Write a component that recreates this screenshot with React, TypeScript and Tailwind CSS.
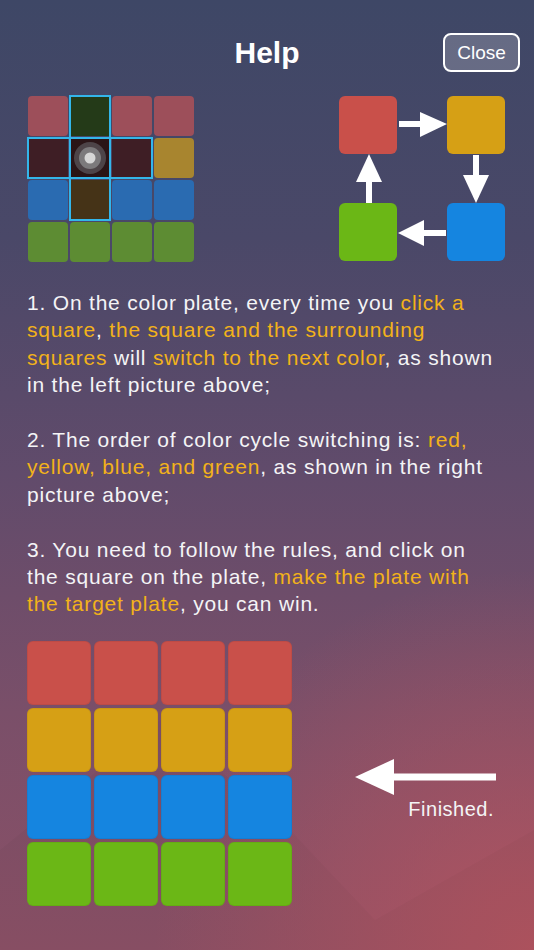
import React from 'react';

const Y = ({ children }: { children: React.ReactNode }) => (
  <span className="text-[#f2b21a]">{children}</span>
);

type Cell = { c: string; hl?: boolean; center?: boolean };

const R = '#9d4f5a';
const YE = '#a8852f';
const B = '#2a6bb1';
const G = '#5d8c33';

const smallGrid: Cell[] = [
  { c: R }, { c: '#243a18', hl: true }, { c: R }, { c: R },
  { c: '#3e1e25', hl: true }, { c: '#2a1517', hl: true, center: true }, { c: '#3e1e25', hl: true }, { c: YE },
  { c: B }, { c: '#453317', hl: true }, { c: B }, { c: B },
  { c: G }, { c: G }, { c: G }, { c: G },
];

const bigRows = ['#c9504a', '#d6a015', '#1585e0', '#6bb716'];

export default function App() {
  return (
    <div
      className="relative w-[534px] h-[950px] overflow-hidden text-white bg-[linear-gradient(180deg,#3e4766_0%,#4a4868_25%,#614b6b_50%,#7a4f69_75%,#8b5066_100%)]"
      style={{ fontFamily: '"Liberation Sans", Arial, sans-serif' }}
    >
      <svg className="absolute inset-0 pointer-events-none" width="534" height="950" viewBox="0 0 534 950">
        <defs>
          <radialGradient id="br" cx="534" cy="950" r="380" gradientUnits="userSpaceOnUse">
            <stop offset="0" stopColor="#b5545f" stopOpacity="0.9" />
            <stop offset="1" stopColor="#b5545f" stopOpacity="0" />
          </radialGradient>
        </defs>
        <rect x="0" y="0" width="534" height="950" fill="url(#br)" />
        <polygon points="0,850 160,720 290,830 375,920 534,830 534,950 0,950" fill="#000000" opacity="0.025" />
      </svg>

      <div className="relative flex flex-col">
        {/* Header */}
        <div className="grid grid-cols-[1fr_auto_1fr] items-center pt-[33px]">
          <div />
          <h1 className="text-[30px] font-bold leading-[39px] text-center">Help</h1>
          <div className="flex justify-end pr-[14px]">
            <button className="w-[77px] h-[39px] rounded-[8px] border-2 border-white bg-white/20 text-[19px] leading-none text-white">
              Close
            </button>
          </div>
        </div>

        {/* Diagrams */}
        <div className="flex justify-between mt-[24px] pl-[28px] pr-[29px]">
          <div className="relative w-[166px] h-[166px]">
            <div className="grid grid-cols-[repeat(4,40px)] grid-rows-[repeat(4,40px)] gap-[2px]">
              {smallGrid.map((cell, i) => (
                <div
                  key={i}
                  className={`${cell.hl ? '' : 'rounded-[4px]'} flex items-center justify-center`}
                  style={{ backgroundColor: cell.c }}
                >
                  {cell.center && (
                    <svg width="40" height="40" viewBox="0 0 40 40">
                      <circle cx="20" cy="20" r="16" fill="#4d4448" />
                      <circle cx="20" cy="20" r="11" fill="#7c7a7c" />
                      <circle cx="20" cy="20" r="5.5" fill="#d6d6d6" />
                    </svg>
                  )}
                </div>
              ))}
            </div>
            <div className="absolute left-[41px] top-[-1px] w-[42px] h-[126px] border-2 border-[#33b6ea]" />
            <div className="absolute left-[-1px] top-[41px] w-[126px] h-[42px] border-2 border-[#33b6ea]" />
          </div>

          <div className="relative w-[166px] h-[165px] grid grid-cols-[58px_58px] grid-rows-[58px_58px] justify-between content-between">
            <div className="rounded-[6px] bg-[#c9504a]" />
            <div className="rounded-[6px] bg-[#d6a015]" />
            <div className="rounded-[6px] bg-[#6bb716]" />
            <div className="rounded-[6px] bg-[#1585e0]" />
            <svg className="absolute inset-0" width="166" height="165" viewBox="0 0 166 165">
              <g fill="#ffffff">
                <rect x="60" y="25" width="22" height="6" />
                <polygon points="81,16 108,28 81,41" />
                <rect x="134" y="59" width="6" height="21" />
                <polygon points="124,79 150,79 137,107" />
                <rect x="84" y="134" width="23" height="6" />
                <polygon points="85,124 59,137 85,150" />
                <rect x="27" y="85" width="6" height="22" />
                <polygon points="17,86 30,58 43,86" />
              </g>
            </svg>
          </div>
        </div>

        {/* Text */}
        <div className="mt-[27px] pl-[27px] pr-[20px] text-[21px] leading-[27.4px] tracking-[0.8px] text-[#f4f4f6]">
          <p>
            1. On the color plate, every time you <Y>click a</Y>
            <br />
            <Y>square</Y>, <Y>the square and the surrounding</Y>
            <br />
            <Y>squares</Y> will <Y>switch to the next color</Y>, as shown
            <br />
            in the left picture above;
          </p>
          <p className="mt-[27.4px]">
            2. The order of color cycle switching is: <Y>red,</Y>
            <br />
            <Y>yellow, blue, and green</Y>, as shown in the right
            <br />
            picture above;
          </p>
          <p className="mt-[27.4px]">
            3. You need to follow the rules, and click on
            <br />
            the square on the plate, <Y>make the plate with</Y>
            <br />
            <Y>the target plate</Y>, you can win.
          </p>
        </div>

        {/* Target plate */}
        <div className="flex items-center mt-[23px] pl-[27px]">
          <div className="grid grid-cols-[repeat(4,64px)] grid-rows-[repeat(4,64px)] gap-[3px]">
            {bigRows.flatMap((c, r) =>
              [0, 1, 2, 3].map((k) => (
                <div
                  key={`${r}-${k}`}
                  className="rounded-[6px] border border-black/5"
                  style={{ backgroundColor: c }}
                />
              ))
            )}
          </div>
          <div className="flex flex-col items-end ml-[63px] mt-[31px]">
            <svg width="141" height="40" viewBox="0 0 141 40">
              <g fill="#ffffff">
                <polygon points="0,20 39,2 39,38" />
                <rect x="38" y="16.5" width="103" height="7" />
              </g>
            </svg>
            <div className="text-[20px] leading-[24px] tracking-[0.5px] pr-[2px] text-[#f4f4f6]">Finished.</div>
          </div>
        </div>
      </div>
    </div>
  );
}
